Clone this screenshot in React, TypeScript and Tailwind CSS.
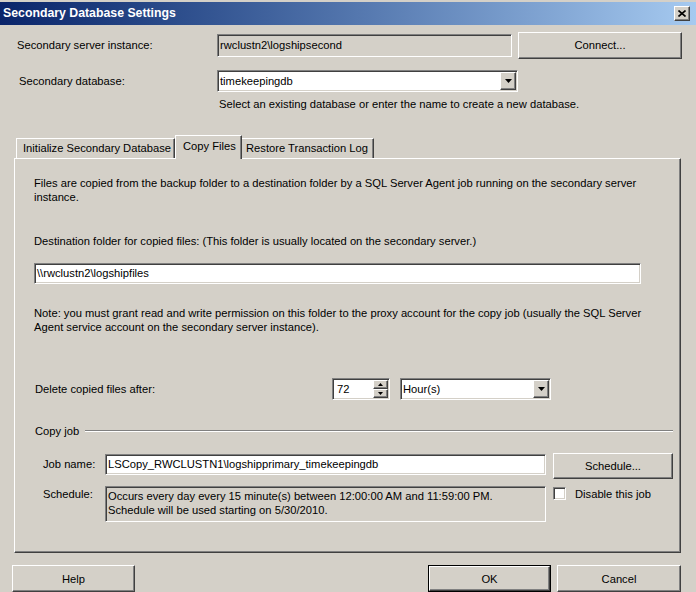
import React from "react";

// classic 3d edges
const sunken =
  "border border-t-[#808080] border-l-[#808080] border-b-white border-r-white shadow-[inset_1px_1px_0_#404040,inset_-1px_-1px_0_#d4d0c8]";
const raised =
  "border border-t-white border-l-white border-b-[#404040] border-r-[#404040] shadow-[inset_-1px_-1px_0_#808080]";

function DropArrow() {
  return (
    <div className={`w-[16px] h-full flex items-center justify-center bg-[#d4d0c8] ${raised}`}>
      <svg width="7" height="4" viewBox="0 0 7 4">
        <path d="M0 0h7L3.5 4z" fill="#000" />
      </svg>
    </div>
  );
}

function Combo({ value, className }: { value: string; className: string }) {
  return (
    <div className={`flex items-stretch bg-white ${sunken} ${className}`}>
      <div className="flex-1 pl-[2px] flex items-center whitespace-nowrap">{value}</div>
      <div className="p-[1px] flex">
        <DropArrow />
      </div>
    </div>
  );
}

function Button({ label, className, isDefault }: { label: string; className: string; isDefault?: boolean }) {
  if (isDefault) {
    return (
      <div className={`border border-black ${className}`}>
        <div className={`w-full h-full flex items-center justify-center bg-[#d4d0c8] ${raised}`}>{label}</div>
      </div>
    );
  }
  return (
    <div className={`flex items-center justify-center bg-[#d4d0c8] ${raised} ${className}`}>{label}</div>
  );
}

export default function App() {
  return (
    <div className="w-[696px] h-[592px] overflow-hidden bg-[#d4d0c8] text-black text-[11.2px] leading-[14px] font-['Liberation_Sans',Arial,sans-serif] flex flex-col">
      {/* title bar */}
      <div className="mt-[2px] h-[23px] flex items-center bg-gradient-to-r from-[#0a246a] to-[#a6caf0]">
        <span className="pl-[3px] text-white font-bold text-[12.3px]">Secondary Database Settings</span>
        <div className="flex-1" />
        <div className={`mr-[6px] w-[16px] h-[15px] flex items-center justify-center bg-[#d4d0c8] ${raised}`}>
          <svg width="8" height="7" viewBox="0 0 8 7">
            <path d="M0.5 0.5L7.5 6.5M7.5 0.5L0.5 6.5" stroke="#000" strokeWidth="1.6" />
          </svg>
        </div>
      </div>

      {/* server instance */}
      <div className="mt-[7px] flex items-center h-[27px]">
        <span className="pl-[17px] w-[217px]">Secondary server instance:</span>
        <div className={`w-[295px] h-[23px] pl-[2px] flex items-center ${sunken}`}>{"rwclustn2\\logshipsecond"}</div>
        <Button label="Connect..." className="ml-[6px] w-[164px] h-[27px]" />
      </div>

      {/* database */}
      <div className="mt-[11px] flex items-center h-[22px]">
        <span className="pl-[19px] w-[217px]">Secondary database:</span>
        <Combo value="timekeepingdb" className="w-[301px] h-[22px]" />
      </div>
      <div className="mt-[5px] pl-[219px]">Select an existing database or enter the name to create a new database.</div>

      {/* tabs */}
      <div className="mt-[24px] ml-[16px] flex items-end relative z-10">
        <div className="w-[159px] h-[20px] pl-[6px] flex items-center border-t border-l border-white border-r border-r-[#404040] shadow-[inset_-1px_0_0_#808080] mb-[1px]">
          Initialize Secondary Database
        </div>
        <div className="w-[67px] h-[24px] pl-[7px] pb-[3px] flex items-center bg-[#d4d0c8] border-t border-l border-white border-r border-r-[#404040] shadow-[inset_-1px_0_0_#808080]">
          Copy Files
        </div>
        <div className="w-[132px] h-[20px] pl-[4px] flex items-center border-t border-white border-r border-r-[#404040] shadow-[inset_-1px_0_0_#808080] mb-[1px]">
          Restore Transaction Log
        </div>
      </div>

      {/* tab panel */}
      <div className={`ml-[14px] -mt-[1px] w-[667px] h-[397px] flex flex-col pl-[19px] pt-[17px] ${raised}`}>
        <div>
          <div>Files are copied from the backup folder to a destination folder by a SQL Server Agent job running on the secondary server</div>
          <div>instance.</div>
        </div>
        <div className="mt-[30px]">Destination folder for copied files: (This folder is usually located on the secondary server.)</div>
        <div className={`mt-[15px] w-[607px] h-[21px] bg-white pl-[2px] flex items-center ${sunken}`}>{"\\\\rwclustn2\\logshipfiles"}</div>
        <div className="mt-[22px]">
          <div>Note: you must grant read and write permission on this folder to the proxy account for the copy job (usually the SQL Server</div>
          <div>Agent service account on the secondary server instance).</div>
        </div>

        <div className="mt-[44px] flex items-center h-[22px]">
          <span className="pl-[1px] w-[298px]">Delete copied files after:</span>
          <div className={`w-[58px] h-[22px] bg-white flex items-stretch ${sunken}`}>
            <div className="flex-1 pl-[4px] flex items-center">72</div>
            <div className="w-[17px] p-[1px] flex flex-col">
              <div className={`flex-1 flex items-center justify-center bg-[#d4d0c8] ${raised}`}>
                <svg width="5" height="3" viewBox="0 0 5 3">
                  <path d="M2.5 0L5 3H0z" fill="#000" />
                </svg>
              </div>
              <div className={`flex-1 flex items-center justify-center bg-[#d4d0c8] ${raised}`}>
                <svg width="5" height="3" viewBox="0 0 5 3">
                  <path d="M0 0h5L2.5 3z" fill="#000" />
                </svg>
              </div>
            </div>
          </div>
          <Combo value="Hour(s)" className="ml-[10px] w-[151px] h-[22px]" />
        </div>

        {/* copy job group */}
        <div className="mt-[24px] pr-[7px] flex items-center h-[14px]">
          <span className="pl-[1px]">Copy job</span>
          <div className="ml-[6px] flex-1 border-t border-t-[#808080] border-b border-b-white" />
        </div>

        <div className="mt-[15px] flex items-start">
          <span className="pl-[9px] w-[71px] h-[21px] mt-[1px] flex items-center">Job name:</span>
          <div className={`mt-[1px] w-[441px] h-[21px] bg-white pl-[2px] flex items-center whitespace-nowrap ${sunken}`}>
            {"LSCopy_RWCLUSTN1\\logshipprimary_timekeepingdb"}
          </div>
          <Button label="Schedule..." className="ml-[7px] w-[120px] h-[26px]" />
        </div>

        <div className="mt-[7px] flex items-start">
          <span className="pl-[9px] w-[71px] pt-[1px]">Schedule:</span>
          <div className={`w-[441px] h-[36px] pl-[2px] pt-[2px] ${sunken}`}>
            <div>Occurs every day every 15 minute(s) between 12:00:00 AM and 11:59:00 PM.</div>
            <div>Schedule will be used starting on 5/30/2010.</div>
          </div>
          <div className={`ml-[7px] mt-[1px] w-[13px] h-[13px] bg-white ${sunken}`} />
          <span className="ml-[9px] mt-[1px]">Disable this job</span>
        </div>
      </div>

      {/* dialog buttons */}
      <div className="mt-[12px] flex pr-[15px]">
        <Button label="Help" className="ml-[12px] w-[123px] h-[27px]" />
        <div className="flex-1" />
        <Button label="OK" isDefault className="w-[123px] h-[27px]" />
        <Button label="Cancel" className="ml-[6px] w-[124px] h-[27px]" />
      </div>
    </div>
  );
}
